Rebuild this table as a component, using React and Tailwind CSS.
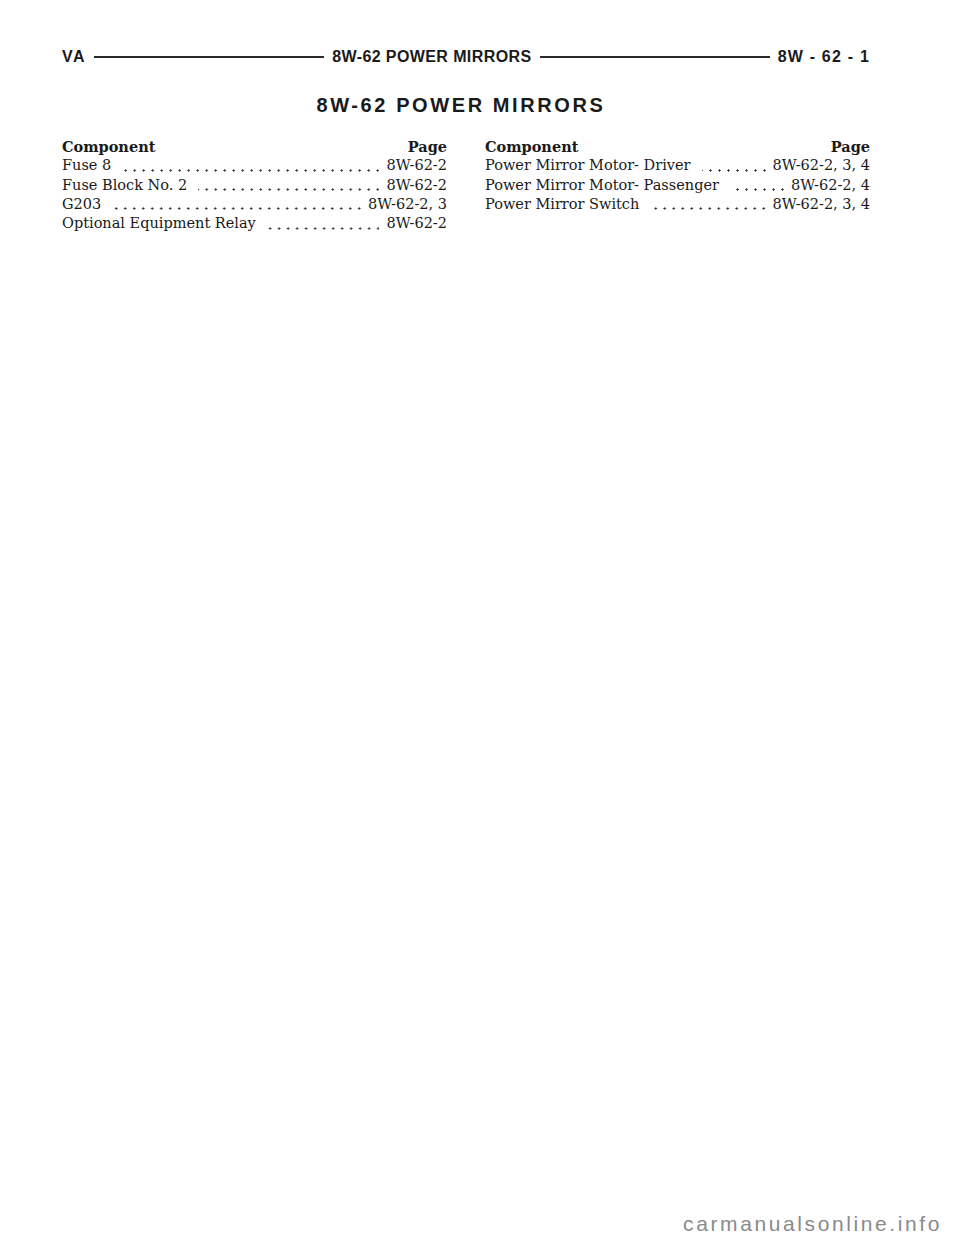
import React from "react";

const left = [
  ["Fuse 8", "8W-62-2"],
  ["Fuse Block No. 2", "8W-62-2"],
  ["G203", "8W-62-2, 3"],
  ["Optional Equipment Relay", "8W-62-2"],
];
const right = [
  ["Power Mirror Motor- Driver", "8W-62-2, 3, 4"],
  ["Power Mirror Motor- Passenger", "8W-62-2, 4"],
  ["Power Mirror Switch", "8W-62-2, 3, 4"],
];

function Column({ rows }) {
  return (
    <div className="flex flex-col">
      <div className="flex justify-between font-bold">
        <span>Component</span>
        <span>Page</span>
      </div>
      {rows.map(([name, page]) => (
        <div key={name} className="flex items-start h-[19.3px]">
          <span className="whitespace-nowrap pr-[9px]">{name}</span>
          <span className="flex-1 ml-[2px] mr-[7px] h-[19px] bg-[radial-gradient(circle,#2a2a2a_0.9px,transparent_1.3px)] bg-[length:9px_3px] bg-repeat-x bg-[position:right_-3px_top_12.5px]" />
          <span className="whitespace-nowrap">{page}</span>
        </div>
      ))}
    </div>
  );
}

export default function App() {
  return (
    <div className="bg-white w-[960px] h-[1242px] flex flex-col text-[#1a1a1a]">
      <div className="ml-[62px] w-[808px] pt-[47px]">
        <div
          className="flex items-center gap-2 font-bold text-[16px] leading-[20px]"
          style={{ fontFamily: '"Liberation Sans", Arial, sans-serif' }}
        >
          <span className="tracking-[1.5px]">VA</span>
          <div className="flex-1 h-[2px] bg-[#2a2a2a]" />
          <span className="tracking-[0.4px]">8W-62 POWER MIRRORS</span>
          <div className="flex-1 h-[2px] bg-[#2a2a2a]" />
          <span className="whitespace-pre tracking-[1.2px]">8W - 62 - 1</span>
        </div>
        <div
          className="mt-[26px] text-center font-bold text-[20px] leading-[24px] tracking-[2.6px] pr-[10px]"
          style={{ fontFamily: '"Liberation Sans", Arial, sans-serif' }}
        >
          8W-62 POWER MIRRORS
        </div>
        <div
          className="mt-[20px] grid grid-cols-2 gap-x-[38px] text-[14.5px] leading-[19.3px]"
          style={{ fontFamily: '"DejaVu Serif", "Liberation Serif", serif' }}
        >
          <Column rows={left} />
          <Column rows={right} />
        </div>
      </div>
      <div className="mt-auto flex justify-end pr-[18px] pb-[4px]">
        <span
          className="text-[21px] leading-[28px] tracking-[2.6px] text-[#8a8a8a]"
          style={{ fontFamily: '"Liberation Sans", Arial, sans-serif' }}
        >
          carmanualsonline.info
        </span>
      </div>
    </div>
  );
}
